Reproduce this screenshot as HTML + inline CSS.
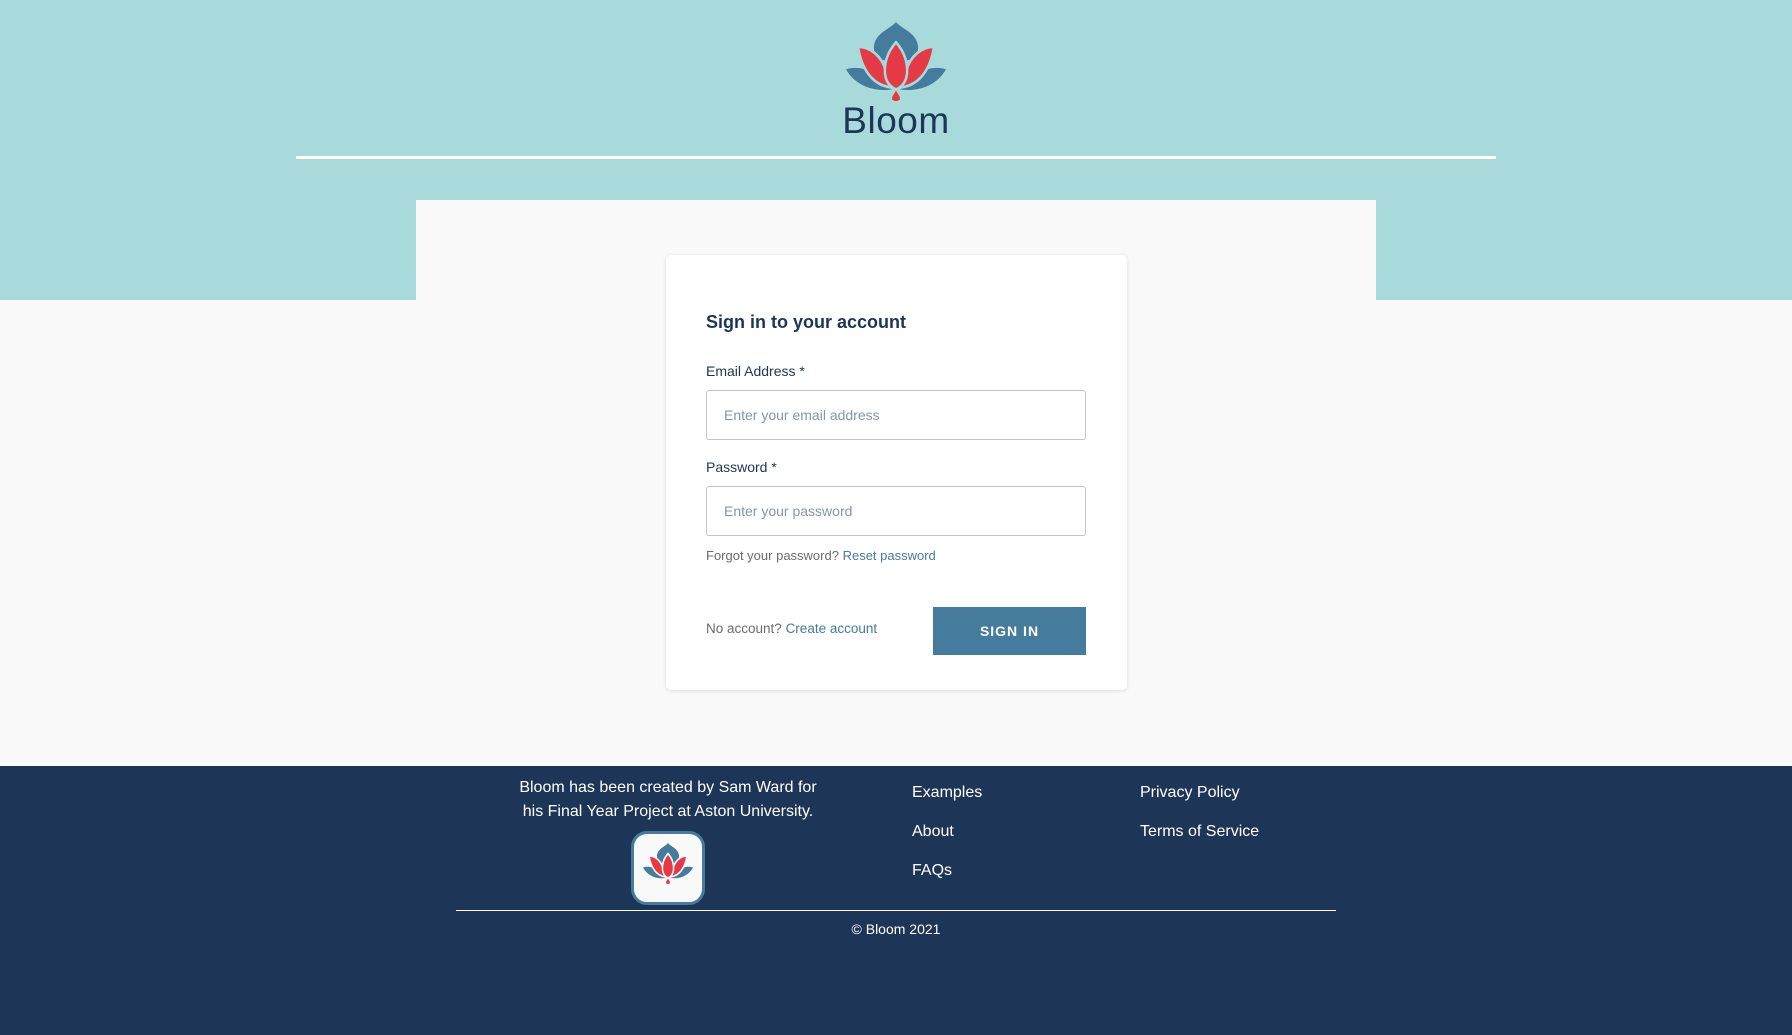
<!DOCTYPE html>
<html><head><meta charset="utf-8"><style>
*{margin:0;padding:0;box-sizing:border-box}
body{width:1792px;height:1035px;overflow:hidden;background:#f9f9f9;font-family:"Liberation Sans",sans-serif;position:relative}
.abs{position:absolute}
#hdr{left:0;top:0;width:1792px;height:300px;background:#a8dadc}
#line{left:296px;top:156px;width:1200px;height:3px;background:#fff}
#panel{left:416px;top:200px;width:960px;height:100px;background:#f9f9f9}
#logo{left:846px;top:22px;width:100px;height:81px}
#brand{left:796px;top:100px;width:200px;text-align:center;font-size:37px;color:#1d3557;letter-spacing:0.5px}
#card{left:666px;top:255px;width:461px;height:435px;background:#fff;border-radius:5px;box-shadow:0 1px 4px rgba(0,0,0,0.12)}
.t{position:absolute;white-space:nowrap}
h1{position:absolute;left:40px;top:57px;font-size:18px;font-weight:bold;color:#1d3557}
.lbl{font-size:14px;color:#1d3557;left:40px}
.inp{position:absolute;left:40px;width:380px;height:50px;border:1px solid #c4c4c4;border-radius:3px;font-size:14px;color:#8a94a6;padding:16px 0 0 17px}
.sm{font-size:13px;color:#6b6b6b;left:40px}
.sm a{color:#457b9d;text-decoration:none}
#btn{left:267px;top:352px;width:153px;height:48px;background:#457b9d;color:#fff;font-weight:bold;font-size:14px;letter-spacing:1px;text-align:center;line-height:48px}
#ftr{left:0;top:766px;width:1792px;height:269px;background:#1d3557;color:#fff}
.f{font-size:16px;color:#fff;position:absolute;white-space:nowrap}
</style></head><body>
<div id="hdr" class="abs"></div>
<div id="line" class="abs"></div>
<div id="panel" class="abs"></div>
<svg id="logo" class="abs" viewBox="0 0 100 72" preserveAspectRatio="none">
<path d="M50 0 C45 6 30 9 28 21 C27 28 32 33 38 34 L62 34 C68 33 73 28 72 21 C70 9 55 6 50 0Z" fill="#457b9d"/>
<path d="M0 42 C14 38 30 44 38 54 L46 60 C30 62 10 58 0 42Z" fill="#457b9d"/>
<path d="M100 42 C86 38 70 44 62 54 L54 60 C70 62 90 58 100 42Z" fill="#457b9d"/>
<g fill="#e63946" stroke="#a8dadc" stroke-width="2.5">
<path d="M12 22 C24 22 36 30 40 44 L44 58 C28 56 16 44 12 22Z"/>
<path d="M88 22 C76 22 64 30 60 44 L56 58 C72 56 84 44 88 22Z"/>
<path d="M50 18 C58 26 62 36 61 46 C60 54 55 58 50 60 C45 58 40 54 39 46 C38 36 42 26 50 18Z"/>
</g>
<path d="M50 61 C52 64 54 66 54 68 C54 71 46 71 46 68 C46 66 48 64 50 61Z" fill="#e63946"/>
</svg>
<div id="brand" class="abs">Bloom</div>
<div id="card" class="abs">
<h1>Sign in to your account</h1>
<div class="t lbl" style="top:108px">Email Address *</div>
<div class="inp" style="top:135px">Enter your email address</div>
<div class="t lbl" style="top:204px">Password *</div>
<div class="inp" style="top:231px">Enter your password</div>
<div class="t sm" style="top:293px">Forgot your password? <a>Reset password</a></div>
<div class="t sm" style="top:366px;font-size:13.5px">No account? <a>Create account</a></div>
<div id="btn" class="abs">SIGN IN</div>
</div>
<div id="ftr" class="abs">
<div class="f" style="left:518px;top:10px;width:300px;text-align:center;line-height:24px;white-space:normal">Bloom has been created by Sam Ward for his Final Year Project at Aston University.</div>
<div class="abs" style="left:631px;top:65px;width:74px;height:74px;background:#f9f9f9;border:3px solid #457b9d;border-radius:16px">
<svg viewBox="0 0 100 72" preserveAspectRatio="none" style="position:absolute;left:9px;top:9px;width:50px;height:42px">
<path d="M50 0 C45 6 30 9 28 21 C27 28 32 33 38 34 L62 34 C68 33 73 28 72 21 C70 9 55 6 50 0Z" fill="#457b9d"/>
<path d="M0 42 C14 38 30 44 38 54 L46 60 C30 62 10 58 0 42Z" fill="#457b9d"/>
<path d="M100 42 C86 38 70 44 62 54 L54 60 C70 62 90 58 100 42Z" fill="#457b9d"/>
<g fill="#e63946" stroke="#f9f9f9" stroke-width="3">
<path d="M12 22 C24 22 36 30 40 44 L44 58 C28 56 16 44 12 22Z"/>
<path d="M88 22 C76 22 64 30 60 44 L56 58 C72 56 84 44 88 22Z"/>
<path d="M50 18 C58 26 62 36 61 46 C60 54 55 58 50 60 C45 58 40 54 39 46 C38 36 42 26 50 18Z"/>
</g>
<path d="M50 61 C52 64 54 66 54 68 C54 71 46 71 46 68 C46 66 48 64 50 61Z" fill="#e63946"/>
</svg></div>
<div class="f" style="left:912px;top:18px">Examples</div>
<div class="f" style="left:912px;top:57px">About</div>
<div class="f" style="left:912px;top:96px">FAQs</div>
<div class="f" style="left:1140px;top:18px">Privacy Policy</div>
<div class="f" style="left:1140px;top:57px">Terms of Service</div>
<div class="abs" style="left:456px;top:144px;width:880px;height:1px;background:#fff"></div>
<div class="f" style="left:0;width:1792px;text-align:center;top:155px;font-size:14px">© Bloom 2021</div>
</div>
</body></html>
